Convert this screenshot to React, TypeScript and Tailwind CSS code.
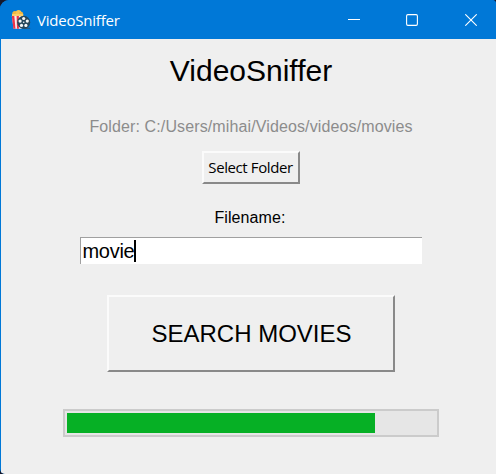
function AppIcon() {
  return (
    <svg width="20" height="20" viewBox="0 0 20 20">
      <circle cx="4" cy="3.6" r="2.7" fill="#f3b73f" />
      <circle cx="7.6" cy="2.8" r="2.8" fill="#f7c454" />
      <circle cx="10" cy="4" r="2.2" fill="#f3b73f" />
      <path d="M1 4h11.3v2H1z" fill="#fbd06a" />
      <path d="M.8 6h11.8L11 18.7H2.6z" fill="#f4f1f3" />
      <path d="M.8 6h2.5l1.2 12.7H2.4zM5.6 6h2.3v12.7H6z" fill="#ee3348" />
      <path d="M12 18.3h7.2" stroke="#36536c" strokeWidth="1" />
      <circle cx="12.7" cy="12.3" r="6.5" fill="#26475b" />
      <g fill="#f4f7f8">
        <circle cx="12.7" cy="8.5" r="1.6" />
        <circle cx="16.3" cy="11.1" r="1.6" />
        <circle cx="14.9" cy="15.4" r="1.6" />
        <circle cx="10.5" cy="15.4" r="1.6" />
        <circle cx="9.1" cy="11.1" r="1.6" />
        <circle cx="12.7" cy="12.3" r=".8" />
      </g>
    </svg>
  );
}

function TitleBar() {
  return (
    <header className="flex h-[39px] shrink-0 items-center bg-[#0078d7] pl-[11px] text-white">
      <AppIcon />
      <span className="ml-[6px] text-[15px] leading-5 tracking-[-0.22px] font-['Open_Sans','Noto_Sans',sans-serif]">
        VideoSniffer
      </span>
      <div className="ml-auto mr-[19px] flex items-center">
        <svg width="12" height="12" viewBox="0 0 12 12">
          <path d="M0 5.5h12" stroke="#fff" />
        </svg>
        <svg className="ml-[46px]" width="12" height="12" viewBox="0 0 12 12">
          <rect x=".6" y=".6" width="10.8" height="10.8" rx="1.3" fill="none" stroke="#fff" strokeWidth="1.1" />
        </svg>
        <svg className="ml-[47px]" width="12" height="12" viewBox="0 0 12 12">
          <path d="M.3.3l11.4 11.4M11.7.3L.3 11.7" stroke="#fff" strokeWidth="1.1" />
        </svg>
      </div>
    </header>
  );
}

export default function App() {
  return (
    <div className="h-[474px] w-[496px] overflow-hidden bg-[#15182c]">
      <div className="flex h-full w-full flex-col overflow-hidden rounded-tl-[9px] rounded-tr-[4px] rounded-bl-[5px] bg-[#0078d7]">
        <TitleBar />
        <main className="ml-px flex grow flex-col items-center bg-[#efefef] pt-[12px] pr-[3px] font-['Liberation_Sans',Arial,sans-serif] text-black">
          <h1 className="ml-[8px] h-10 text-[30px] leading-10">VideoSniffer</h1>
          <p className="ml-[8px] mt-[26px] h-5 whitespace-nowrap text-[16px] leading-5 tracking-[0.12px] text-[#8c8c8c]">
            Folder: C:/Users/mihai/Videos/videos/movies
          </p>
          <button className="ml-[7px] mt-[14px] h-[33px] w-[98px] whitespace-nowrap border-2 border-t-[#fbfbfb] border-r-[#898989] border-b-[#898989] border-l-[#fbfbfb] text-[15px] leading-[29px] tracking-[-0.4px] font-['Open_Sans','Noto_Sans',sans-serif]">
            Select Folder
          </button>
          <label className="ml-[6px] mt-[24px] h-5 text-[16px] leading-5 tracking-[0.1px]">Filename:</label>
          <div className="ml-[7px] mt-[9px] flex h-[27px] w-[342px] items-center border-t border-l border-[#a0a0a0] bg-white pl-[2px] text-[20px] leading-[26px]">
            <span className="tracking-[-0.3px]">movie</span>
            <span className="h-[22px] w-[2px] bg-black" />
          </div>
          <button className="ml-[7px] mt-[31px] h-[77px] w-[288px] border-2 border-t-[#fbfbfb] border-r-[#898989] border-b-[#898989] border-l-[#fbfbfb] pl-[2px] text-[24px] leading-[73px]">
            SEARCH MOVIES
          </button>
          <div className="ml-[7px] mt-[37px] h-[28px] w-[376px] border-2 border-[#cbcbcb] bg-[#e6e6e6] p-[2px]">
            <div className="h-[20px] w-[308px] bg-[#06b025]" />
          </div>
        </main>
      </div>
    </div>
  );
}
